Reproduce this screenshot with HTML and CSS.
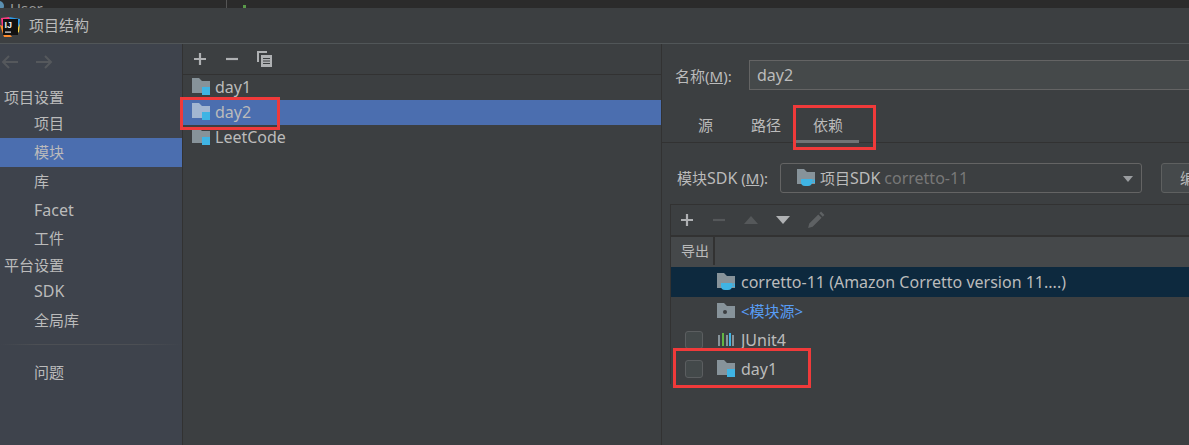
FILE: index.html
```html
<!DOCTYPE html>
<html lang="zh-CN">
<head>
  <meta charset="UTF-8">
  <title>项目结构</title>
  <link rel="stylesheet" href="styles.css">
</head>
<body>
<svg class="defs" width="0" height="0">
  <symbol id="module" viewBox="0 0 18 18">
    <path d="M0 0h7l3 3h8v12H0z" fill="currentColor"/>
    <rect x="10" y="9" width="8" height="8" fill="#3fb4e4"/>
  </symbol>
  <symbol id="sdk" viewBox="0 0 18 18">
    <path d="M0 0h7l3 3h8v12H0z" fill="currentColor"/>
    <path d="M4 10h11v3a4 4 0 0 1-4 4H8a4 4 0 0 1-4-4z" fill="#3fb4e4"/>
    <path d="M15 11h2.500v2.500H15z" fill="none" stroke="#3fb4e4" stroke-width="1.200"/>
  </symbol>
</svg>

<div class="window">
  <div class="strip">
    <span class="strip-dot"></span>
    <span class="strip-user">User</span>
    <span class="strip-line"></span>
    <span class="strip-check"></span>
  </div>

  <div class="titlebar">
    <svg class="logo" viewBox="0 0 20 20" width="20" height="20">
      <polygon points="1,1 9,0 12,5 2,10" fill="#fc3a81"/>
      <polygon points="9,0 20,2 19,10 12,5" fill="#2d9be8"/>
      <polygon points="0,8 4,20 12,20 3,9" fill="#ff8c2e"/>
      <polygon points="15,18 20,6 19,15" fill="#f4d33b"/>
      <rect x="3" y="2" width="15" height="16" fill="#111"/>
      <text x="4.500" y="11" class="logo-text">IJ</text>
      <rect x="5" y="14.500" width="6" height="1.200" fill="#ddd"/>
    </svg>
    <span>项目结构</span>
  </div>

  <div class="main">
    <nav class="sidebar">
      <div class="nav-arrows">
        <svg viewBox="0 0 18 14" width="18" height="14"><path d="M17 7H2M8 1L2 7l6 6" class="arrow"/></svg>
        <svg viewBox="0 0 18 14" width="18" height="14"><path d="M1 7h15M10 1l6 6-6 6" class="arrow"/></svg>
      </div>
      <div class="nav-head first">项目设置</div>
      <div class="nav-item">项目</div>
      <div class="nav-item current">模块</div>
      <div class="nav-item">库</div>
      <div class="nav-item latin">Facet</div>
      <div class="nav-item short raised">工件</div>
      <div class="nav-head">平台设置</div>
      <div class="nav-item latin">SDK</div>
      <div class="nav-item short">全局库</div>
      <div class="nav-sep"></div>
      <div class="nav-item">问题</div>
    </nav>

    <section class="modules">
      <div class="modules-bar">
        <svg viewBox="0 0 14 14" width="14" height="14"><path d="M7 1v12M1 7h12" class="tool light"/></svg>
        <svg viewBox="0 0 14 14" width="14" height="14"><path d="M1 7h12" class="tool light"/></svg>
        <svg viewBox="0 0 16 16" width="16" height="16">
          <path d="M1 11V1h9" fill="none" stroke="#afb1b3" stroke-width="2"/>
          <rect x="4" y="4" width="11" height="12" fill="#afb1b3"/>
          <path d="M6 7.500h7M6 10h7M6 12.500h7" stroke="#3c3f41" stroke-width="1"/>
        </svg>
      </div>
      <div class="module-row latin"><svg class="ico"><use href="#module"/></svg>day1</div>
      <div class="module-row latin current"><svg class="ico"><use href="#module"/></svg>day2</div>
      <div class="module-row latin"><svg class="ico"><use href="#module"/></svg>LeetCode</div>
    </section>

    <section class="detail">
      <div class="name-row">
        <label>名称(<u>M</u>):</label>
        <div class="name-input latin">day2</div>
      </div>

      <div class="tabs">
        <span class="tab">源</span>
        <span class="tab">路径</span>
        <span class="tab active">依赖</span>
      </div>

      <div class="sdk-row">
        <label>模块<span class="latin">SDK</span> (<u>M</u>):</label>
        <div class="combo">
          <svg class="ico"><use href="#sdk"/></svg>
          <span>项目<span class="latin">SDK</span> <em class="latin">corretto-11</em></span>
          <i class="combo-arrow"></i>
        </div>
        <div class="btn">编辑</div>
      </div>

      <div class="deps">
        <div class="deps-bar">
          <svg viewBox="0 0 14 14" width="14" height="14"><path d="M7 1v12M1 7h12" class="tool light"/></svg>
          <svg viewBox="0 0 14 14" width="14" height="14"><path d="M1 7h12" class="tool dim"/></svg>
          <svg viewBox="0 0 14 8" width="14" height="8"><path d="M0 8L7 0l7 8z" fill="#55585a"/></svg>
          <svg viewBox="0 0 14 8" width="14" height="8"><path d="M0 0l7 8 7-8z" fill="#afb1b3"/></svg>
          <svg viewBox="0 0 16 16" width="18" height="18"><path d="M1 15l1-4 8-8 3 3-8 8zM11 2l1.500-1.500 3 3L14 5z" fill="#5e6163"/></svg>
        </div>
        <div class="deps-head"><span>导出</span></div>
        <div class="dep-row latin current"><span class="check none"></span><svg class="ico"><use href="#sdk"/></svg>corretto-11 (Amazon Corretto version 11....)</div>
        <div class="dep-row"><span class="check none"></span>
          <svg class="ico" viewBox="0 0 18 18"><path d="M0 1h7l3 3h8v12H0z" fill="#87939a"/><circle cx="8" cy="10" r="2" fill="#3c3f41"/></svg>
          <span class="src">&lt;模块源&gt;</span></div>
        <div class="dep-row latin"><span class="check"></span>
          <svg class="ico" viewBox="0 0 18 18">
            <path d="M1 4h2v11H1zM9 4h2v11H9zM15 4h2v11h-2z" fill="#87939a"/>
            <path d="M5 2h2v13H5z" fill="#62b543"/>
            <path d="M12 2h2v13h-2z" fill="#3fb4e4"/>
          </svg>JUnit4</div>
        <div class="dep-row latin"><span class="check"></span><svg class="ico"><use href="#module"/></svg>day1</div>
      </div>
    </section>
  </div>

  <div class="mark mark-module"></div>
  <div class="mark mark-tab"></div>
  <div class="mark mark-dep"></div>
</div>
</body>
</html>
```

FILE: styles.css
```css
* {
  padding: 0;
  margin: 0;
  box-sizing: border-box;
}

html, body {
  height: 100%;
  overflow: hidden;
}

body {
  background: #3c3f41;
  color: #bbbbbb;
  font-family: "Noto Sans", "Noto Sans CJK SC", sans-serif;
  font-size: 15px;
}

.latin {
  font-size: 16px;
}

.defs {
  position: absolute;
}

.window {
  position: relative;
  width: 1189px;
  height: 445px;
  display: flex;
  flex-direction: column;
  overflow: hidden;
}

/* the IDE behind the dialog */
.strip {
  position: relative;
  height: 8px;
  flex: none;
  background: #2b2b2b;
  overflow: hidden;
  font-size: 15px;
  line-height: 16px;
  color: #9a9a9a;
}

.strip-dot {
  position: absolute;
  left: -6px;
  top: 1px;
  width: 10px;
  height: 10px;
  border-radius: 50%;
  background: #5a8fb0;
}

.strip-user {
  position: absolute;
  left: 10px;
  top: 0;
}

.strip-line {
  position: absolute;
  left: 226px;
  top: 0;
  width: 1px;
  height: 8px;
  background: #555;
}

.strip-check {
  position: absolute;
  left: 243px;
  top: 5px;
  width: 3px;
  height: 3px;
  background: #5a9a4a;
}

.titlebar {
  height: 36px;
  flex: none;
  display: flex;
  align-items: center;
  gap: 9px;
  border-bottom: 1px solid #515658;
  background: #3c3f41;
  line-height: 35px;
}

.logo {
  flex: none;
  margin-top: 2px;
}

.logo-text {
  font: bold 9px "Liberation Sans", sans-serif;
  fill: #eee;
}

.main {
  flex: 1;
  display: flex;
  min-height: 0;
}

/* left nav */
.sidebar {
  width: 183px;
  flex: none;
  background: #3e434c;
  border-right: 1px solid #323232;
}

.nav-arrows {
  height: 36px;
  display: flex;
  align-items: center;
  gap: 16px;
  padding-left: 1px;
}

.arrow {
  fill: none;
  stroke: #55585c;
  stroke-width: 2;
}

.nav-head {
  height: 24px;
  line-height: 24px;
  padding-left: 4px;
}

.nav-head.first {
  height: 29px;
  line-height: 35px;
}

.nav-item {
  height: 29px;
  line-height: 29px;
  padding-left: 34px;
}

.nav-item.short {
  height: 28px;
  line-height: 28px;
}

.nav-item.raised {
  line-height: 26px;
}

.nav-item.current {
  background: #4b6eaf;
}

.nav-sep {
  height: 1px;
  margin: 10px 0 13px;
  background: linear-gradient(to right, #3e434c, #4c4f54 20%, #4c4f54 75%, #3e434c);
}

/* module list */
.modules {
  width: 479px;
  flex: none;
  border-right: 1px solid #323232;
}

.modules-bar {
  height: 31px;
  display: flex;
  align-items: center;
  gap: 18px;
  padding-left: 10px;
  border-bottom: 1px solid #323232;
}

.tool {
  fill: none;
  stroke-width: 2.200;
}

.tool.light {
  stroke: #afb1b3;
}

.tool.dim {
  stroke: #55585a;
}

.ico {
  width: 18px;
  height: 18px;
  flex: none;
  color: #87939a;
}

.module-row {
  height: 25px;
  display: flex;
  align-items: center;
  gap: 5px;
  padding: 0 0 1px 9px;
}

.module-row.current {
  background: #4b6eaf;
}

.module-row.current .ico {
  color: #a3b6d2;
}

/* right side */
.detail {
  flex: 1;
  min-width: 0;
  padding-top: 16px;
}

.name-row {
  display: flex;
  align-items: center;
  padding-left: 13px;
}

.name-row label {
  width: 74px;
  flex: none;
}

.name-input {
  flex: 1;
  height: 30px;
  line-height: 28px;
  padding-left: 7px;
  background: #45494a;
  border: 1px solid #646464;
  border-right: 0;
}

.tabs {
  height: 53px;
  display: flex;
  align-items: flex-end;
  padding-left: 19px;
  border-bottom: 1px solid #323232;
}

.tab {
  height: 32px;
  line-height: 29px;
  padding: 0 17px;
  border-bottom: 3px solid transparent;
  margin-bottom: -1px;
}

.tab:nth-child(2) {
  margin-left: 4px;
  padding: 0 14px 0 17px;
}

.tab.active {
  border-bottom-color: #707375;
  padding: 0 16px 0 18px;
}

.sdk-row {
  display: flex;
  align-items: center;
  height: 30px;
  margin-top: 20px;
  padding-left: 15px;
  white-space: nowrap;
}

.sdk-row label {
  width: 94px;
  flex: none;
}

.combo {
  width: 362px;
  height: 30px;
  flex: none;
  margin-left: 9px;
  display: flex;
  align-items: center;
  gap: 5px;
  padding-left: 16px;
  position: relative;
  border: 1px solid #646464;
  border-radius: 3px;
}

.combo em {
  font-style: normal;
  color: #787878;
}

.combo-arrow {
  position: absolute;
  right: 8px;
  top: 12px;
  border-left: 5px solid transparent;
  border-right: 5px solid transparent;
  border-top: 6px solid #9a9da0;
}

.btn {
  width: 80px;
  height: 30px;
  margin-left: 19px;
  padding-left: 18px;
  line-height: 28px;
  flex: none;
  background: #45494b;
  border: 1px solid #5e6060;
  border-radius: 3px;
}

.deps {
  margin: 11px 0 0 8px;
  border-left: 1px solid #323232;
  border-top: 1px solid #323232;
}

.deps-bar {
  height: 32px;
  display: flex;
  align-items: center;
  gap: 18px;
  padding-left: 9px;
  border-bottom: 2px solid #323232;
}

.deps-bar svg:nth-child(5) {
  margin-left: -1px;
}

.deps-head {
  height: 30px;
  background: #45484a;
  padding-left: 10px;
  font-size: 14px;
  line-height: 28px;
}

.deps-head span {
  display: block;
  width: 34px;
  height: 28px;
  border-right: 2px solid #323232;
}

.dep-row {
  height: 29px;
  display: flex;
  align-items: center;
  padding: 0 0 2px 14px;
}

.dep-row.current {
  height: 30px;
  padding-bottom: 0;
  background: #0d293e;
}

.dep-row .ico {
  margin-left: 14px;
  margin-right: 6px;
}

.check {
  width: 18px;
  height: 18px;
  flex: none;
  border: 1px solid #5b5e60;
  border-radius: 3px;
  background: #43494a;
}

.check.none {
  visibility: hidden;
}

.src {
  color: #589df6;
}

/* red annotation boxes drawn over the screenshot */
.mark {
  position: absolute;
  border: 3px solid #f03a3a;
}

.mark-module {
  left: 180px;
  top: 97px;
  width: 100px;
  height: 33px;
}

.mark-tab {
  left: 793px;
  top: 105px;
  width: 83px;
  height: 45px;
}

.mark-dep {
  left: 673px;
  top: 348px;
  width: 138px;
  height: 40px;
}
```
